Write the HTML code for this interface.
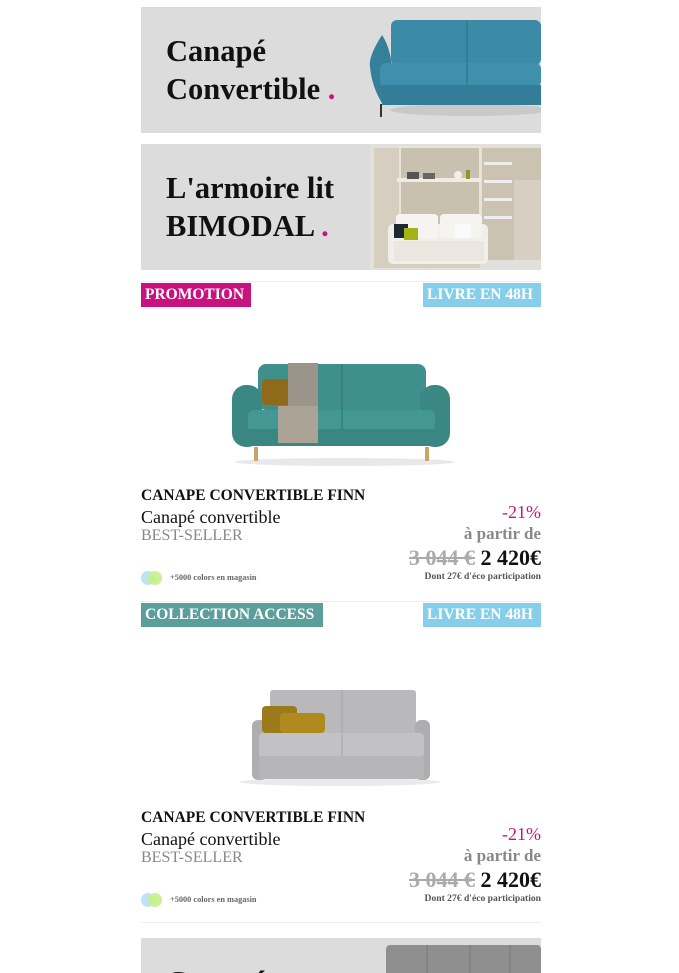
<!DOCTYPE html>
<html><head><meta charset="utf-8"><style>
*{margin:0;padding:0;box-sizing:border-box}
html,body{width:679px;height:973px;overflow:hidden}
body{background:#fff;position:relative;font-family:"Liberation Serif",serif}
.a{position:absolute}
.ban{position:absolute;left:141px;width:400px;height:126px;background:#dcdcdc;overflow:hidden}
.bt{position:absolute;left:25px;font-weight:bold;font-size:30.5px;line-height:38px;color:#111}
.dot{color:#c8137f}
.badge{position:absolute;height:24px;color:#fff;font-weight:bold;font-size:15.5px;line-height:24px;padding:0 4px;white-space:nowrap}
.line{position:absolute;left:141px;width:400px;height:1px;background:#eee}
.t1{font-weight:bold;font-size:15.5px;color:#111;white-space:nowrap}
.t2{font-size:18px;color:#111}
.t3{font-size:16px;color:#888}
.r{position:absolute;right:138px;text-align:right;white-space:nowrap}
</style></head><body>

<div class="ban" style="top:7px">
 <div class="bt" style="top:25px">Canapé<br>Convertible <span class="dot">.</span></div>
 <svg class="a" style="left:219px;top:0" width="181" height="126">
  <ellipse cx="110" cy="103" rx="80" ry="6" fill="#c9c9c9"/>
  <rect x="31" y="13" width="150" height="45" rx="6" fill="#3b8aa6"/>
  <line x1="107" y1="14" x2="107" y2="60" stroke="#2c6e86"/>
  <path d="M10 60 Q8 50 22 28 Q30 40 32 60 L32 96 L22 96 Q12 80 10 60Z" fill="#357f9a"/>
  <rect x="20" y="56" width="161" height="24" rx="6" fill="#3f90ad"/>
  <line x1="107" y1="56" x2="107" y2="80" stroke="#2c6e86"/>
  <rect x="22" y="78" width="159" height="20" fill="#347d98"/>
  <line x1="21" y1="97" x2="21" y2="110" stroke="#333" stroke-width="2"/>
 </svg>
</div>

<div class="ban" style="top:144px">
 <div class="bt" style="top:25px">L'armoire lit<br>BIMODAL <span class="dot">.</span></div>
 <svg class="a" style="left:219px;top:0" width="181" height="126">
  <rect x="10" y="0" width="171" height="126" fill="#e2e0dc"/>
  <rect x="14" y="4" width="106" height="120" fill="#d6cfc0"/>
  <rect x="40" y="3" width="80" height="110" fill="#c9c1b0" stroke="#e8e4dc" stroke-width="2"/>
  <rect x="37" y="34" width="84" height="4" fill="#f0ece4"/>
  <rect x="122" y="4" width="59" height="112" fill="#cbc3b2"/>
  <rect x="124" y="18" width="28" height="3" fill="#eee"/><rect x="124" y="36" width="28" height="3" fill="#eee"/>
  <rect x="124" y="54" width="28" height="3" fill="#eee"/><rect x="124" y="72" width="28" height="3" fill="#eee"/>
  <rect x="154" y="36" width="27" height="80" fill="#d7d0c2"/>
  <rect x="47" y="28" width="12" height="7" fill="#555"/><rect x="63" y="29" width="12" height="6" fill="#666"/>
  <circle cx="98" cy="31" r="4" fill="#eee"/><rect x="106" y="26" width="4" height="9" fill="#8a9a2a"/>
  <rect x="28" y="80" width="100" height="40" rx="5" fill="#f2efea"/>
  <rect x="36" y="70" width="42" height="24" rx="4" fill="#f6f4f0"/>
  <rect x="80" y="70" width="42" height="24" rx="4" fill="#f6f4f0"/>
  <rect x="34" y="97" width="90" height="20" fill="#ebe7e0"/>
  <rect x="34" y="80" width="14" height="14" fill="#1b2a30"/>
  <rect x="44" y="84" width="14" height="12" fill="#a4b215"/>
  <rect x="95" y="80" width="16" height="14" fill="#fafafa"/>
 </svg>
</div>

<div class="line" style="top:281px"></div>
<div class="badge" style="top:283px;left:141px;width:110px;background:#c8137f">PROMOTION</div>
<div class="badge" style="top:283px;left:423px;width:118px;background:#87ceeb">LIVRE EN 48H</div>

<svg class="a" style="left:210px;top:350px" width="270" height="120">
 <ellipse cx="135" cy="112" rx="110" ry="4" fill="#e8e8e8"/>
 <rect x="48" y="14" width="168" height="46" rx="8" fill="#3f8f8c"/>
 <line x1="132" y1="15" x2="132" y2="60" stroke="#2f716e"/>
 <rect x="22" y="35" width="30" height="62" rx="14" fill="#3a8783"/>
 <rect x="210" y="35" width="30" height="62" rx="14" fill="#3a8783"/>
 <rect x="38" y="60" width="187" height="22" rx="6" fill="#449894"/>
 <line x1="132" y1="60" x2="132" y2="82" stroke="#2f716e"/>
 <rect x="28" y="79" width="207" height="17" rx="6" fill="#3a8682"/>
 <rect x="44" y="97" width="4" height="14" fill="#caa464"/><rect x="215" y="97" width="4" height="14" fill="#caa464"/>
 <rect x="52" y="29" width="52" height="26" rx="4" fill="#8e6a1a"/>
 <rect x="78" y="13" width="30" height="45" fill="#9b948a"/>
 <rect x="68" y="56" width="40" height="37" fill="#aaa396"/>
</svg>

<div class="a t1" style="left:141px;top:487px">CANAPE CONVERTIBLE FINN</div>
<div class="a t2" style="left:141px;top:507px">Canapé convertible</div>
<div class="a t3" style="left:141px;top:527px">BEST-SELLER</div>
<svg class="a" style="left:141px;top:570px" width="22" height="16"><circle cx="7" cy="8" r="7" fill="#bfe3f2"/><circle cx="14" cy="8" r="7" fill="#c4ef8a" opacity=".9"/></svg>
<div class="a" style="left:170px;top:573px;font-size:8.3px;font-weight:bold;color:#666">+5000 colors en magasin</div>
<div class="r" style="top:502px;font-size:18px;color:#c8137f">-21%</div>
<div class="r" style="top:524px;font-size:17px;font-weight:bold;color:#888">à partir de</div>
<div class="r" style="top:545px;font-size:22px;font-weight:bold"><span style="color:#aaa;text-decoration:line-through">3 044 €</span> <span style="color:#111">2 420€</span></div>
<div class="r" style="top:571px;font-size:9.6px;font-weight:bold;color:#555">Dont 27€ d'éco participation</div>

<div class="line" style="top:601px"></div>
<div class="badge" style="top:603px;left:141px;width:182px;background:#5c9e9c">COLLECTION ACCESS</div>
<div class="badge" style="top:603px;left:423px;width:118px;background:#87ceeb">LIVRE EN 48H</div>

<svg class="a" style="left:220px;top:680px" width="240" height="110">
 <ellipse cx="120" cy="102" rx="100" ry="4" fill="#eaeaea"/>
 <rect x="50" y="10" width="146" height="47" rx="3" fill="#b9b8bb"/>
 <line x1="122" y1="10" x2="122" y2="56" stroke="#a5a4a7"/>
 <rect x="32" y="40" width="15" height="60" rx="6" fill="#aeadb0"/>
 <rect x="195" y="40" width="15" height="60" rx="6" fill="#aeadb0"/>
 <rect x="39" y="53" width="165" height="24" rx="4" fill="#c2c1c4"/>
 <line x1="122" y1="54" x2="122" y2="77" stroke="#a5a4a7"/>
 <rect x="39" y="76" width="165" height="23" fill="#b6b5b8"/>
 <rect x="42" y="26" width="35" height="27" rx="4" fill="#9b7a1c"/>
 <rect x="60" y="33" width="45" height="20" rx="4" fill="#b08a1e"/>
</svg>

<div class="a t1" style="left:141px;top:809px">CANAPE CONVERTIBLE FINN</div>
<div class="a t2" style="left:141px;top:829px">Canapé convertible</div>
<div class="a t3" style="left:141px;top:849px">BEST-SELLER</div>
<svg class="a" style="left:141px;top:892px" width="22" height="16"><circle cx="7" cy="8" r="7" fill="#bfe3f2"/><circle cx="14" cy="8" r="7" fill="#c4ef8a" opacity=".9"/></svg>
<div class="a" style="left:170px;top:895px;font-size:8.3px;font-weight:bold;color:#666">+5000 colors en magasin</div>
<div class="r" style="top:824px;font-size:18px;color:#c8137f">-21%</div>
<div class="r" style="top:846px;font-size:17px;font-weight:bold;color:#888">à partir de</div>
<div class="r" style="top:867px;font-size:22px;font-weight:bold"><span style="color:#aaa;text-decoration:line-through">3 044 €</span> <span style="color:#111">2 420€</span></div>
<div class="r" style="top:893px;font-size:9.6px;font-weight:bold;color:#555">Dont 27€ d'éco participation</div>

<div class="line" style="top:922px"></div>
<div class="ban" style="top:938px;height:35px">
 <div class="bt" style="top:25px">Canapé</div>
 <svg class="a" style="left:245px;top:7px" width="155" height="40"><rect x="0" y="0" width="155" height="40" rx="4" fill="#8f8f8f"/><line x1="41" y1="0" x2="41" y2="40" stroke="#777"/><line x1="84" y1="0" x2="84" y2="40" stroke="#777"/><line x1="124" y1="0" x2="124" y2="40" stroke="#777"/></svg>
</div>
</body></html>
